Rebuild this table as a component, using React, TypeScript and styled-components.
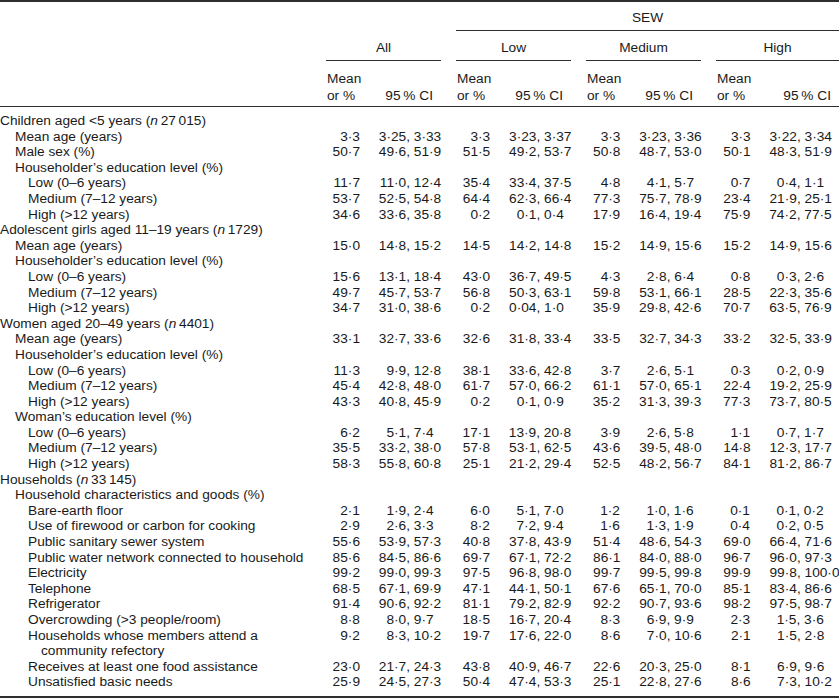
import React from 'react';
import styled, { createGlobalStyle } from 'styled-components';

const GlobalStyle = createGlobalStyle`
  html, body { margin: 0; padding: 0; background: #ffffff; }
  body {
    font-family: "Liberation Sans", Arial, Helvetica, sans-serif;
    font-size: 13.7px;
    color: #1a1a1a;
  }
`;

const LABEL_W = 326;
const GROUP_W = [115, 115, 115, 123];
const RULE = '#2e2e2e';

const Table = styled.div`
  width: 839px;
  border-top: 2px solid ${RULE};
  border-bottom: 2px solid ${RULE};
`;

const Head = styled.div`
  border-bottom: 1px solid ${RULE};
`;

const Row = styled.div`
  display: flex;
  align-items: flex-start;
`;

const LabelSpacer = styled.div`
  flex: 0 0 ${LABEL_W}px;
`;

const Groups = styled.div`
  display: flex;
  gap: 15px;
  flex: 1;
`;

const Slot = styled.div<{ $w: number }>`
  flex: 0 0 ${(p) => p.$w}px;
`;

const SewHead = styled.div`
  flex: 1;
  text-align: center;
  line-height: 16px;
  padding: 8px 0 4px;
  border-bottom: 1px solid ${RULE};
`;

const GroupHead = styled.div<{ $w: number }>`
  flex: 0 0 ${(p) => p.$w}px;
  text-align: center;
  line-height: 16px;
  padding: 9px 0 4px;
  border-bottom: 1px solid ${RULE};
`;

const Group = styled.div<{ $w: number }>`
  flex: 0 0 ${(p) => p.$w}px;
  display: grid;
  grid-template-columns: 34px 1fr;
`;

const MeanHead = styled.div`
  line-height: 17px;
  padding: 8.5px 0 2.5px 1px;
  white-space: nowrap;
`;

const CiHead = styled.div`
  align-self: end;
  line-height: 17px;
  padding: 0 8px 2.5px 0;
  text-align: right;
  white-space: nowrap;
`;

const Body = styled.div`
  padding: 6px 0;
`;

const BodyRow = styled(Row)`
  line-height: 15.6px;
`;

const Label = styled.div<{ $level: number; $wrap?: boolean }>`
  flex: 0 0 ${LABEL_W}px;
  box-sizing: border-box;
  padding-left: ${(p) => [0, 15, 28][p.$level] + (p.$wrap ? 13 : 0)}px;
  text-indent: ${(p) => (p.$wrap ? -13 : 0)}px;
  white-space: nowrap;
`;

const Mean = styled.div`
  text-align: right;
  white-space: nowrap;
`;

const Ci = styled.div`
  display: grid;
  grid-template-columns: 50px auto;
  white-space: nowrap;
`;

const CiLo = styled.span`
  text-align: right;
`;

const CiHi = styled.span`
  padding-left: 0.28em;
`;

const Ital = styled.i`
  font-style: italic;
`;

type RowDef = {
  label: React.ReactNode;
  level: 0 | 1 | 2;
  v?: string;
  wrap?: boolean;
};

const N = ({ n }: { n: string }) => (
  <>
    {'('}
    <Ital>n</Ital>
    {'\u2009' + n + ')'}
  </>
);

const rows: RowDef[] = [
  { label: <>{'Children aged <5 years '}<N n={'27\u2009015'} /></>, level: 0 },
  { label: 'Mean age (years)', level: 1, v: '3.3 3.25 3.33 3.3 3.23 3.37 3.3 3.23 3.36 3.3 3.22 3.34' },
  { label: 'Male sex (%)', level: 1, v: '50.7 49.6 51.9 51.5 49.2 53.7 50.8 48.7 53.0 50.1 48.3 51.9' },
  { label: 'Householder\u2019s education level (%)', level: 1 },
  { label: 'Low (0\u20136 years)', level: 2, v: '11.7 11.0 12.4 35.4 33.4 37.5 4.8 4.1 5.7 0.7 0.4 1.1' },
  { label: 'Medium (7\u201312 years)', level: 2, v: '53.7 52.5 54.8 64.4 62.3 66.4 77.3 75.7 78.9 23.4 21.9 25.1' },
  { label: 'High (>12 years)', level: 2, v: '34.6 33.6 35.8 0.2 0.1 0.4 17.9 16.4 19.4 75.9 74.2 77.5' },
  { label: <>{'Adolescent girls aged 11\u201319 years '}<N n="1729" /></>, level: 0 },
  { label: 'Mean age (years)', level: 1, v: '15.0 14.8 15.2 14.5 14.2 14.8 15.2 14.9 15.6 15.2 14.9 15.6' },
  { label: 'Householder\u2019s education level (%)', level: 1 },
  { label: 'Low (0\u20136 years)', level: 2, v: '15.6 13.1 18.4 43.0 36.7 49.5 4.3 2.8 6.4 0.8 0.3 2.6' },
  { label: 'Medium (7\u201312 years)', level: 2, v: '49.7 45.7 53.7 56.8 50.3 63.1 59.8 53.1 66.1 28.5 22.3 35.6' },
  { label: 'High (>12 years)', level: 2, v: '34.7 31.0 38.6 0.2 0.04 1.0 35.9 29.8 42.6 70.7 63.5 76.9' },
  { label: <>{'Women aged 20\u201349 years '}<N n="4401" /></>, level: 0 },
  { label: 'Mean age (years)', level: 1, v: '33.1 32.7 33.6 32.6 31.8 33.4 33.5 32.7 34.3 33.2 32.5 33.9' },
  { label: 'Householder\u2019s education level (%)', level: 1 },
  { label: 'Low (0\u20136 years)', level: 2, v: '11.3 9.9 12.8 38.1 33.6 42.8 3.7 2.6 5.1 0.3 0.2 0.9' },
  { label: 'Medium (7\u201312 years)', level: 2, v: '45.4 42.8 48.0 61.7 57.0 66.2 61.1 57.0 65.1 22.4 19.2 25.9' },
  { label: 'High (>12 years)', level: 2, v: '43.3 40.8 45.9 0.2 0.1 0.9 35.2 31.3 39.3 77.3 73.7 80.5' },
  { label: 'Woman\u2019s education level (%)', level: 1 },
  { label: 'Low (0\u20136 years)', level: 2, v: '6.2 5.1 7.4 17.1 13.9 20.8 3.9 2.6 5.8 1.1 0.7 1.7' },
  { label: 'Medium (7\u201312 years)', level: 2, v: '35.5 33.2 38.0 57.8 53.1 62.5 43.6 39.5 48.0 14.8 12.3 17.7' },
  { label: 'High (>12 years)', level: 2, v: '58.3 55.8 60.8 25.1 21.2 29.4 52.5 48.2 56.7 84.1 81.2 86.7' },
  { label: <>{'Households '}<N n={'33\u2009145'} /></>, level: 0 },
  { label: 'Household characteristics and goods (%)', level: 1 },
  { label: 'Bare-earth floor', level: 2, v: '2.1 1.9 2.4 6.0 5.1 7.0 1.2 1.0 1.6 0.1 0.1 0.2' },
  { label: 'Use of firewood or carbon for cooking', level: 2, v: '2.9 2.6 3.3 8.2 7.2 9.4 1.6 1.3 1.9 0.4 0.2 0.5' },
  { label: 'Public sanitary sewer system', level: 2, v: '55.6 53.9 57.3 40.8 37.8 43.9 51.4 48.6 54.3 69.0 66.4 71.6' },
  { label: 'Public water network connected to household', level: 2, v: '85.6 84.5 86.6 69.7 67.1 72.2 86.1 84.0 88.0 96.7 96.0 97.3' },
  { label: 'Electricity', level: 2, v: '99.2 99.0 99.3 97.5 96.8 98.0 99.7 99.5 99.8 99.9 99.8 100.0' },
  { label: 'Telephone', level: 2, v: '68.5 67.1 69.9 47.1 44.1 50.1 67.6 65.1 70.0 85.1 83.4 86.6' },
  { label: 'Refrigerator', level: 2, v: '91.4 90.6 92.2 81.1 79.2 82.9 92.2 90.7 93.6 98.2 97.5 98.7' },
  { label: 'Overcrowding (>3 people/room)', level: 2, v: '8.8 8.0 9.7 18.5 16.7 20.4 8.3 6.9 9.9 2.3 1.5 3.6' },
  {
    label: (
      <>
        {'Households whose members attend a'}
        <br />
        {'community refectory'}
      </>
    ),
    level: 2,
    wrap: true,
    v: '9.2 8.3 10.2 19.7 17.6 22.0 8.6 7.0 10.6 2.1 1.5 2.8',
  },
  { label: 'Receives at least one food assistance', level: 2, v: '23.0 21.7 24.3 43.8 40.9 46.7 22.6 20.3 25.0 8.1 6.9 9.6' },
  { label: 'Unsatisfied basic needs', level: 2, v: '25.9 24.5 27.3 50.4 47.4 53.3 25.1 22.8 27.6 8.6 7.3 10.2' },
];

const fmt = (s: string) => s.replace('.', '\u00b7');

const groupNames = ['All', 'Low', 'Medium', 'High'];

export default function App() {
  return (
    <>
      <GlobalStyle />
      <Table>
        <Head>
          <Row>
            <LabelSpacer />
            <Groups>
              <Slot $w={GROUP_W[0]} />
              <SewHead>SEW</SewHead>
            </Groups>
          </Row>
          <Row>
            <LabelSpacer />
            <Groups>
              {groupNames.map((g, i) => (
                <GroupHead key={g} $w={GROUP_W[i]}>
                  {g}
                </GroupHead>
              ))}
            </Groups>
          </Row>
          <Row>
            <LabelSpacer />
            <Groups>
              {groupNames.map((g, i) => (
                <Group key={g} $w={GROUP_W[i]}>
                  <MeanHead>
                    Mean
                    <br />
                    or %
                  </MeanHead>
                  <CiHead>{'95\u2009% CI'}</CiHead>
                </Group>
              ))}
            </Groups>
          </Row>
        </Head>
        <Body>
          {rows.map((r, idx) => {
            const nums = r.v ? r.v.split(' ').map(fmt) : null;
            return (
              <BodyRow key={idx}>
                <Label $level={r.level} $wrap={r.wrap}>
                  {r.label}
                </Label>
                {nums && (
                  <Groups>
                    {[0, 1, 2, 3].map((g) => (
                      <Group key={g} $w={GROUP_W[g]}>
                        <Mean>{nums[g * 3]}</Mean>
                        <Ci>
                          <CiLo>{nums[g * 3 + 1]},</CiLo>
                          <CiHi>{nums[g * 3 + 2]}</CiHi>
                        </Ci>
                      </Group>
                    ))}
                  </Groups>
                )}
              </BodyRow>
            );
          })}
        </Body>
      </Table>
    </>
  );
}
